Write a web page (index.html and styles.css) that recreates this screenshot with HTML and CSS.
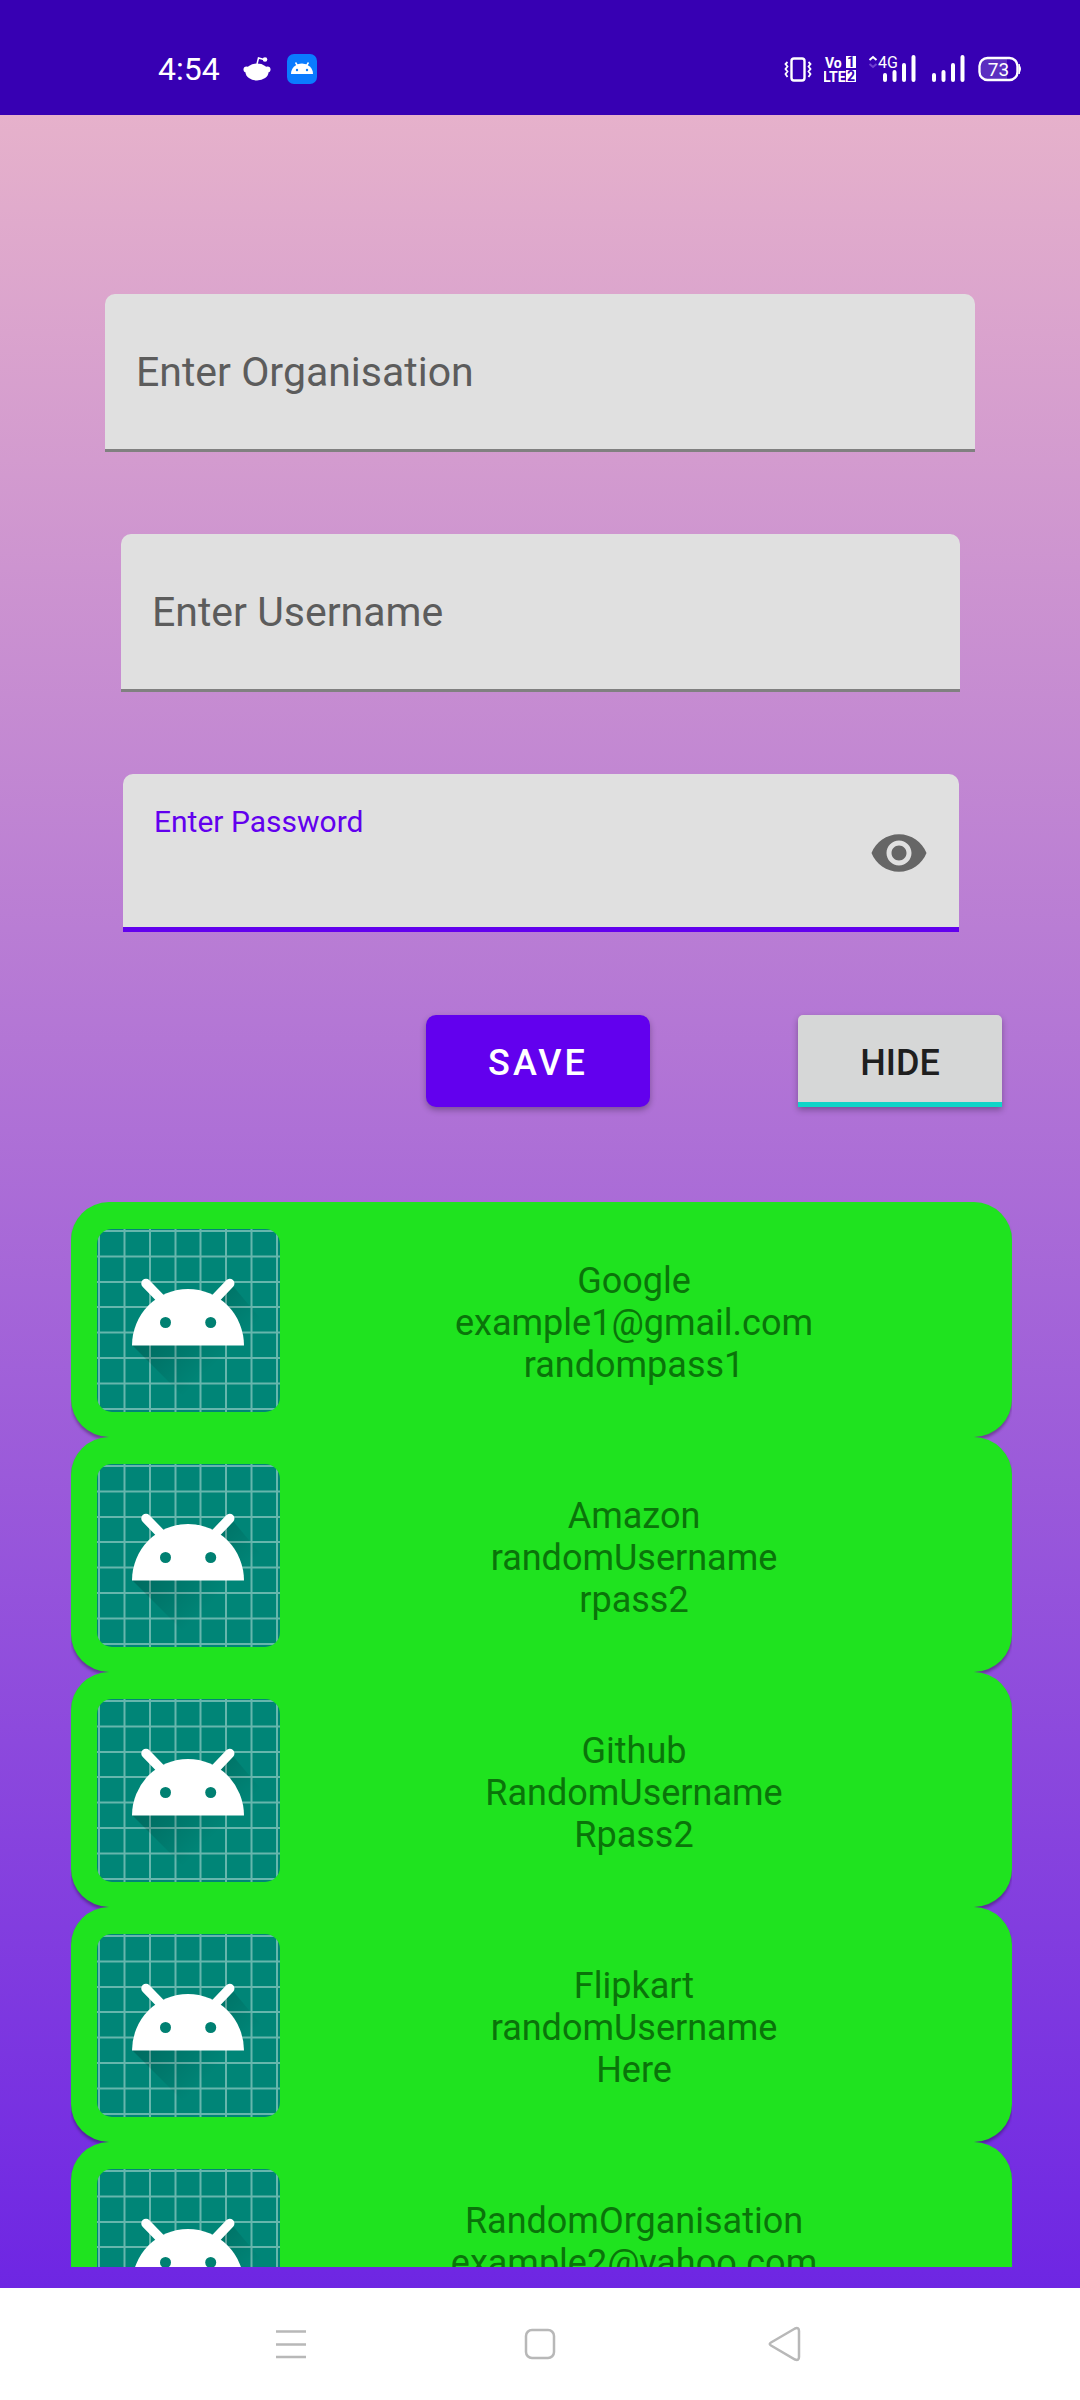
FILE: index.html
```html
<!DOCTYPE html>
<html lang="en">
<head>
<meta charset="utf-8">
<meta name="viewport" content="width=device-width, initial-scale=1">
<title>Password Manager</title>
<link rel="stylesheet" href="styles.css">
</head>
<body>
<svg class="sprite" aria-hidden="true">
  <defs>
    <linearGradient id="shade" gradientUnits="userSpaceOnUse" x1="55" y1="85" x2="112" y2="142">
      <stop offset="0" stop-color="#000" stop-opacity=".22"/>
      <stop offset="1" stop-color="#000" stop-opacity="0"/>
    </linearGradient>
    <clipPath id="tile"><rect width="183" height="183" rx="15"/></clipPath>
  </defs>
  <symbol id="launcher" viewBox="0 0 183 183">
    <g clip-path="url(#tile)">
      <rect width="183" height="183" fill="#008577"/>
      <path d="M2 0V183M27.500 0V183M53 0V183M78.500 0V183M103.500 0V183M129 0V183M154.500 0V183M180 0V183M0 2H183M0 27.500H183M0 53H183M0 78H183M0 103.500H183M0 129H183M0 154.500H183M0 180H183" stroke="#fff" stroke-opacity=".4" stroke-width="2" fill="none"/>
      <path d="M35 116L102 183H183V113L136 57L120 73L91 60Z" fill="url(#shade)"/>
    </g>
    <path d="M35 116.500a56 56.500 0 0 1 112 0Z" fill="#fff"/>
    <path d="M49 54.500L66 72M132.700 54.500L116 72" stroke="#fff" stroke-width="9.500" stroke-linecap="round"/>
    <circle cx="68.500" cy="93.500" r="5.500" fill="#008072"/>
    <circle cx="113.700" cy="93.500" r="5.500" fill="#008072"/>
  </symbol>
</svg>

<header class="status">
  <div class="status-left">
    <time class="clock">4:54</time>
    <svg width="28" height="30" viewBox="0 0 28 30" aria-label="Reddit">
      <g fill="#fff"><ellipse cx="14" cy="18" rx="11.500" ry="8.500"/><circle cx="3.500" cy="15.500" r="3"/><circle cx="24.500" cy="15.500" r="3"/><circle cx="22" cy="5.500" r="2.300"/></g>
      <path d="M14 10L15.500 4L21 5.500" fill="none" stroke="#fff" stroke-width="1.500"/>
    </svg>
    <svg width="30" height="30" viewBox="0 0 30 30" aria-label="Android">
      <rect width="30" height="30" rx="7" fill="#0a7bff"/>
      <path d="M4 20a11 10.500 0 0 1 22 0Z" fill="#fff"/>
      <path d="M8.500 8.500L11 12.500M21.500 8.500L19 12.500" stroke="#fff" stroke-width="1.500"/>
      <circle cx="10" cy="16" r="1.200" fill="#0a7bff"/><circle cx="20" cy="16" r="1.200" fill="#0a7bff"/>
    </svg>
  </div>
  <div class="status-right">
    <svg width="28" height="30" viewBox="0 0 28 30" aria-label="Vibrate">
      <rect x="7.500" y="4.500" width="13" height="22" rx="2.500" fill="none" stroke="#fff" stroke-width="2.400"/>
      <path d="M3.500 8L1.500 10L3.500 12.500L1.500 15L3.500 17.500L1.500 20L3.500 23M24.500 8L26.500 10L24.500 12.500L26.500 15L24.500 17.500L26.500 20L24.500 23" fill="none" stroke="#fff" stroke-width="1.800"/>
    </svg>
    <svg class="volte" width="32" height="30" viewBox="0 0 32 30" aria-label="VoLTE">
      <text x="1" y="14">Vo</text><text x="-1" y="28">LTE</text>
      <rect x="22" y="2" width="10" height="12" fill="#fff"/><rect x="22" y="16" width="10" height="12" fill="#fff"/>
      <text class="cut" x="27" y="13">1</text><text class="cut" x="27" y="27">2</text>
    </svg>
    <svg class="net" width="50" height="30" viewBox="0 0 50 30" aria-label="4G signal">
      <path d="M1.500 6L5 3L8.500 6" fill="none" stroke="#fff" stroke-width="2"/>
      <path d="M1.500 10L5 13L8.500 10" fill="none" stroke="#7040d0" stroke-width="2"/>
      <text x="10" y="14">4G</text>
      <path d="M17 21V26M26.500 18V26M36 11V26M45.500 3V26" stroke="#fff" stroke-width="4" stroke-linecap="round"/>
    </svg>
    <svg width="36" height="30" viewBox="0 0 36 30" aria-label="Signal">
      <path d="M4 21V26M13.500 18V26M23 11V26M32.500 3V26" stroke="#fff" stroke-width="4" stroke-linecap="round"/>
    </svg>
    <svg class="battery" width="44" height="30" viewBox="0 0 44 30" aria-label="Battery 73 percent">
      <rect x="1.500" y="4" width="38" height="22" rx="8" fill="none" stroke="#fff" stroke-width="2.400"/>
      <path d="M9 5H29V25H9Q3 25 3 18V12Q3 5 9 5Z" fill="#fff" fill-opacity=".18"/>
      <path d="M41 10Q44 15 41 20Z" fill="#fff" stroke="#fff"/>
      <text x="20.500" y="22">73</text>
    </svg>
  </div>
</header>

<main class="screen">
  <form class="form">
    <div class="field organisation">
      <label for="org">Enter Organisation</label>
      <input id="org" type="text">
    </div>
    <div class="field username">
      <label for="user">Enter Username</label>
      <input id="user" type="text">
    </div>
    <div class="field password active">
      <label for="pass">Enter Password</label>
      <input id="pass" type="password">
      <button class="reveal" type="button" aria-label="Show password">
        <svg width="60" height="60" viewBox="0 0 24 24"><path fill="#666" d="M12 4.500C7 4.500 2.730 7.610 1 12c1.730 4.390 6 7.500 11 7.500s9.270-3.110 11-7.500c-1.730-4.390-6-7.500-11-7.500zM12 17c-2.760 0-5-2.240-5-5s2.240-5 5-5 5 2.240 5 5-2.240 5-5 5zm0-8c-1.660 0-3 1.340-3 3s1.340 3 3 3 3-1.340 3-3-1.340-3-3-3z"/></svg>
      </button>
    </div>
    <div class="actions">
      <button class="save" type="button">SAVE</button>
      <button class="toggle" type="button" aria-pressed="true">HIDE</button>
    </div>
  </form>

  <ul class="list">
    <li class="card"><svg class="logo" aria-hidden="true"><use href="#launcher"/></svg><p>Google<br>example1@gmail.com<br>randompass1</p></li>
    <li class="card"><svg class="logo" aria-hidden="true"><use href="#launcher"/></svg><p>Amazon<br>randomUsername<br>rpass2</p></li>
    <li class="card"><svg class="logo" aria-hidden="true"><use href="#launcher"/></svg><p>Github<br>RandomUsername<br>Rpass2</p></li>
    <li class="card"><svg class="logo" aria-hidden="true"><use href="#launcher"/></svg><p>Flipkart<br>randomUsername<br>Here</p></li>
    <li class="card"><svg class="logo" aria-hidden="true"><use href="#launcher"/></svg><p>RandomOrganisation<br>example2@yahoo.com</p></li>
  </ul>
</main>

<nav class="navbar">
  <button type="button" aria-label="Recent apps"><svg width="48" height="48" viewBox="0 0 48 48"><path d="M8 11.500H38M8 24.500H38M8 37H38"/></svg></button>
  <button type="button" aria-label="Home"><svg width="48" height="48" viewBox="0 0 48 48"><rect x="10" y="10" width="28" height="28" rx="6"/></svg></button>
  <button type="button" aria-label="Back"><svg width="48" height="48" viewBox="0 0 48 48"><path d="M31 8.500L7 22.500Q4.500 24 7 25.500L31 39.500Q35 41 35 37V11Q35 7 31 8.500Z"/></svg></button>
</nav>
</body>
</html>
```
FILE: styles.css
```css
* {
  box-sizing: border-box;
}

body {
  margin: 0;
  height: 100vh;
  display: flex;
  flex-direction: column;
  font-family: Roboto, "Noto Sans", sans-serif;
}

button {
  padding: 0;
  border: 0;
  background: none;
  font: inherit;
}

.sprite {
  display: block;
  width: 0;
  height: 0;
  flex: none;
}

/* System status bar */
.status {
  flex: none;
  height: 115px;
  padding: 22px 58px 0 158px;
  display: flex;
  align-items: center;
  justify-content: space-between;
  background: #3700b3;
  color: #fff;
}

.status-left,
.status-right {
  display: flex;
  align-items: center;
}

.status-left {
  gap: 16px;
}

.status-right {
  gap: 12px;
}

.clock {
  width: 69px;
  font-size: 32px;
  line-height: 32px;
}

.status text {
  fill: #fff;
}

.volte text {
  font: bold 14px "Liberation Sans Narrow", Roboto, sans-serif;
}

.volte .cut {
  fill: #3700b3;
  text-anchor: middle;
}

.net text {
  font-size: 16px;
}

.battery text {
  font-size: 19px;
  text-anchor: middle;
}

/* App screen */
.screen {
  flex: 1;
  min-height: 0;
  display: flex;
  flex-direction: column;
  padding: 179px 68px 21px 71px;
  background: linear-gradient(#e6b1cb, #6e26e3);
}

.form {
  flex: none;
  display: flex;
  flex-direction: column;
}

.field {
  height: 158px;
  margin-bottom: 82px;
  display: grid;
  grid-template-columns: 1fr auto;
  grid-template-rows: 1fr;
  background: #e0e0e0;
  border-bottom: 3px solid #808080;
  border-radius: 10px 10px 0 0;
}

.organisation {
  margin-left: 34px;
  margin-right: 37px;
}

.username {
  margin-left: 50px;
  margin-right: 52px;
}

.password {
  margin-left: 52px;
  margin-right: 53px;
}

.field label {
  grid-area: 1 / 1;
  align-self: center;
  padding-left: 31px;
  font-size: 41px;
  line-height: 48px;
  color: #5c5c5c;
}

.field input {
  grid-area: 1 / 1;
  min-width: 0;
  padding: 40px 31px 0;
  border: 0;
  outline: 0;
  background: transparent;
  font: inherit;
  font-size: 41px;
}

.field.active {
  border-bottom: 5px solid #6200ee;
}

.field.active label {
  align-self: start;
  padding-top: 28px;
  font-size: 30px;
  line-height: 40px;
  color: #6200ee;
}

.reveal {
  margin-right: 30px;
  padding-top: 4px;
  align-self: center;
  display: flex;
}

.actions {
  display: flex;
  justify-content: flex-end;
  gap: 148px;
  padding-right: 10px;
  margin: 1px 0 95px;
}

.save,
.toggle {
  height: 92px;
  padding-top: 3px;
  font-size: 36px;
  font-weight: 500;
  box-shadow: 0 3px 6px rgba(0, 0, 0, 0.3);
}

.save {
  width: 224px;
  border-radius: 10px;
  background: #6200ee;
  color: #fff;
  letter-spacing: 3px;
}

.toggle {
  width: 204px;
  padding-top: 8px;
  border-bottom: 5px solid #0fd5c8;
  border-radius: 5px 5px 0 0;
  background: #d6d7d7;
  color: #1f1f1f;
}

/* Saved entries */
.list {
  flex: 1;
  min-height: 0;
  margin: 0;
  padding: 0;
  overflow: hidden;
  list-style: none;
}

.card {
  height: 235px;
  padding: 27px 24px 25px 26px;
  display: flex;
  align-items: center;
  border-radius: 38px;
  background: #1fe31f;
  box-shadow: 0 3px 3px rgba(0, 0, 0, 0.3);
}

.logo {
  flex: none;
  width: 183px;
  height: 183px;
}

.card p {
  flex: 1;
  min-height: 130px;
  margin: 0;
  padding-top: 4px;
  font-size: 36px;
  line-height: 42px;
  text-align: center;
  color: #0a740a;
}

/* System navigation */
.navbar {
  flex: none;
  height: 112px;
  display: flex;
  align-items: center;
  justify-content: center;
  gap: 200px;
  background: #fff;
}

.navbar button {
  display: flex;
}

.navbar svg {
  fill: none;
  stroke: #b8b8b8;
  stroke-width: 2.5;
}
```
